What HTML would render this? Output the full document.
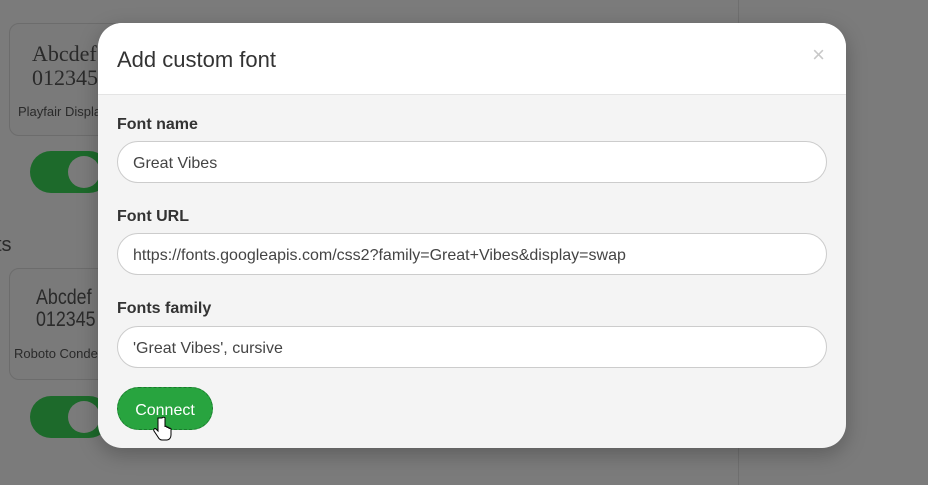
<!DOCTYPE html>
<html><head><style>
body{margin:0;width:928px;height:485px;overflow:hidden;background:#7b7b7b;font-family:"Liberation Sans",sans-serif;position:relative}
.div{position:absolute;left:738px;top:0;width:1px;height:485px;background:#6f6f6f}
.card{position:absolute;left:9px;width:300px;background:#7a7a7a;border:1px solid #6c6c6c;border-radius:10px}
.tog{position:absolute;left:30px;width:80px;height:42px;border-radius:21px;background:#1d6a2b}
.tog:after{content:"";position:absolute;left:38px;top:5px;width:32px;height:32px;border-radius:50%;background:#7b7b7b}
.modal{position:absolute;left:98px;top:23px;width:748px;height:425px;border-radius:24px;background:#f4f4f4;overflow:hidden;box-shadow:0 6px 20px rgba(0,0,0,.25)}
.hd{height:71px;background:#fff;border-bottom:1px solid #e4e4e4;position:relative}
.hd h1{margin:0;position:absolute;left:19px;top:24px;font-size:22px;font-weight:normal;color:#333}
.x{position:absolute;right:21px;top:19px;font-size:22px;color:#c8c8c8}
label{position:absolute;left:19px;font-size:16px;font-weight:bold;color:#333}
.in{position:absolute;left:19px;border:1px solid #ccc;border-radius:21px;background:#fff;font-size:16px;color:#444;line-height:44px;padding-left:15px;box-sizing:border-box;width:710px;height:42px}
.btn{position:absolute;left:19px;top:364px;width:96px;height:43px;border-radius:22px;background:#28a43f;color:#fff;font-size:16px;text-align:center;line-height:45px;border:1px dashed #1c7a2e;box-sizing:border-box}
</style></head><body>
<div class="div"></div>
<div class="card" style="top:23px;height:111px"><div style="position:absolute;left:22px;top:18px;font-family:'Liberation Serif',serif;font-size:22px;color:#2a2a2a;line-height:24px">Abcdef<br>012345</div><div style="position:absolute;left:8px;top:80px;font-size:13px;color:#2a2a2a">Playfair Display</div></div>
<div class="tog" style="top:151px"></div>
<div style="position:absolute;left:-4px;top:234px;font-size:20px;color:#2a2a2a">ts</div>
<div class="card" style="top:268px;height:110px"><div style="position:absolute;left:26px;top:18px;font-size:21px;color:#2a2a2a;line-height:22px;transform:scaleX(.85);transform-origin:left">Abcdef<br>012345</div><div style="position:absolute;left:4px;top:77px;font-size:13px;color:#2a2a2a">Roboto Condensed</div></div>
<div class="tog" style="top:396px"></div>
<div class="modal">
<div class="hd"><h1>Add custom font</h1><span class="x">×</span></div>
<label style="top:93px">Font name</label>
<div class="in" style="top:118px">Great Vibes</div>
<label style="top:185px">Font URL</label>
<div class="in" style="top:210px">https://fonts.googleapis.com/css2?family=Great+Vibes&amp;display=swap</div>
<label style="top:277px">Fonts family</label>
<div class="in" style="top:303px">'Great Vibes', cursive</div>
<div class="btn">Connect</div>
<svg style="position:absolute;left:55px;top:393px" width="20" height="26" viewBox="0 0 20 26"><path d="M5 2v13l-2-2c-1-1-3 0-2 2l4 6c1 2 2 3 4 3h5c2 0 4-2 4-5v-6c0-1-2-1-2 0v-1c0-1-2-1-2 0v-1c0-1-2-1-2 0V2c0-1-3-1-3 0z" fill="#fff" stroke="#000" stroke-width="1"/></svg>
</div>
</body></html>
